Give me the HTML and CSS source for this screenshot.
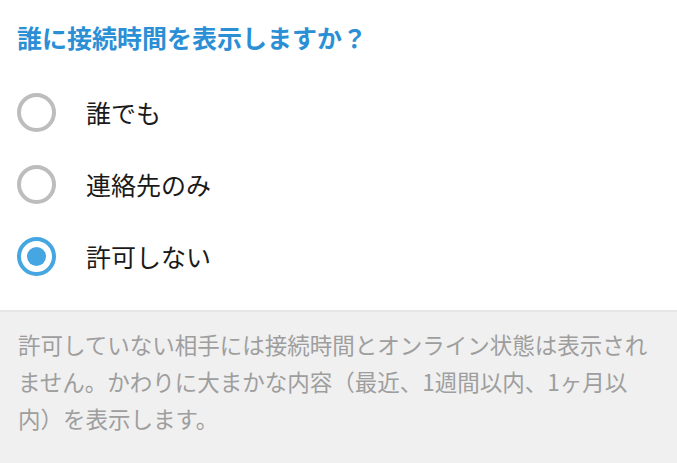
FILE: index.html
```html
<!DOCTYPE html>
<html lang="ja">
<head>
<meta charset="utf-8">
<link rel="stylesheet" href="styles.css">
</head>
<body>
<section class="panel">
  <h1 class="title">誰に接続時間を表示しますか？</h1>
  <div class="options">
    <label class="option"><span class="radio"></span><span class="label">誰でも</span></label>
    <label class="option"><span class="radio"></span><span class="label">連絡先のみ</span></label>
    <label class="option"><span class="radio checked"></span><span class="label">許可しない</span></label>
  </div>
</section>
<section class="note">
  <p class="note-text">許可していない相手には接続時間とオンライン状態は表示されません。かわりに大まかな内容（最近、1週間以内、1ヶ月以内）を表示します。</p>
</section>
</body>
</html>
```

FILE: styles.css
```css
html, body {
  margin: 0;
  padding: 0;
  background: #f0f0f0;
  font-family: "Noto Sans CJK JP", "Noto Sans", sans-serif;
}
.panel {
  background: #ffffff;
  padding: 21px 0 18px;
}
.title {
  margin: 0 0 23px 17px;
  font-size: 25px;
  line-height: 32px;
  font-weight: 700;
  color: #2b8fd6;
}
.options {
  display: flex;
  flex-direction: column;
}
.option {
  display: flex;
  align-items: center;
  height: 72px;
  padding-left: 17px;
}
.radio {
  box-sizing: border-box;
  width: 39px;
  height: 39px;
  border: 4px solid #bdbdbd;
  border-radius: 50%;
  display: flex;
  align-items: center;
  justify-content: center;
  flex: none;
}
.radio.checked {
  border-color: #45a6e1;
}
.radio.checked::after {
  content: "";
  width: 19px;
  height: 19px;
  border-radius: 50%;
  background: #45a6e1;
}
.label {
  margin-left: 30px;
  font-size: 25px;
  color: #1a1a1a;
}
.note {
  border-top: 2px solid #e6e6e6;
  padding: 14px 18px 20px;
}
.note-text {
  margin: 0;
  font-size: 22.5px;
  line-height: 37px;
  color: #9e9e9e;
}
```
